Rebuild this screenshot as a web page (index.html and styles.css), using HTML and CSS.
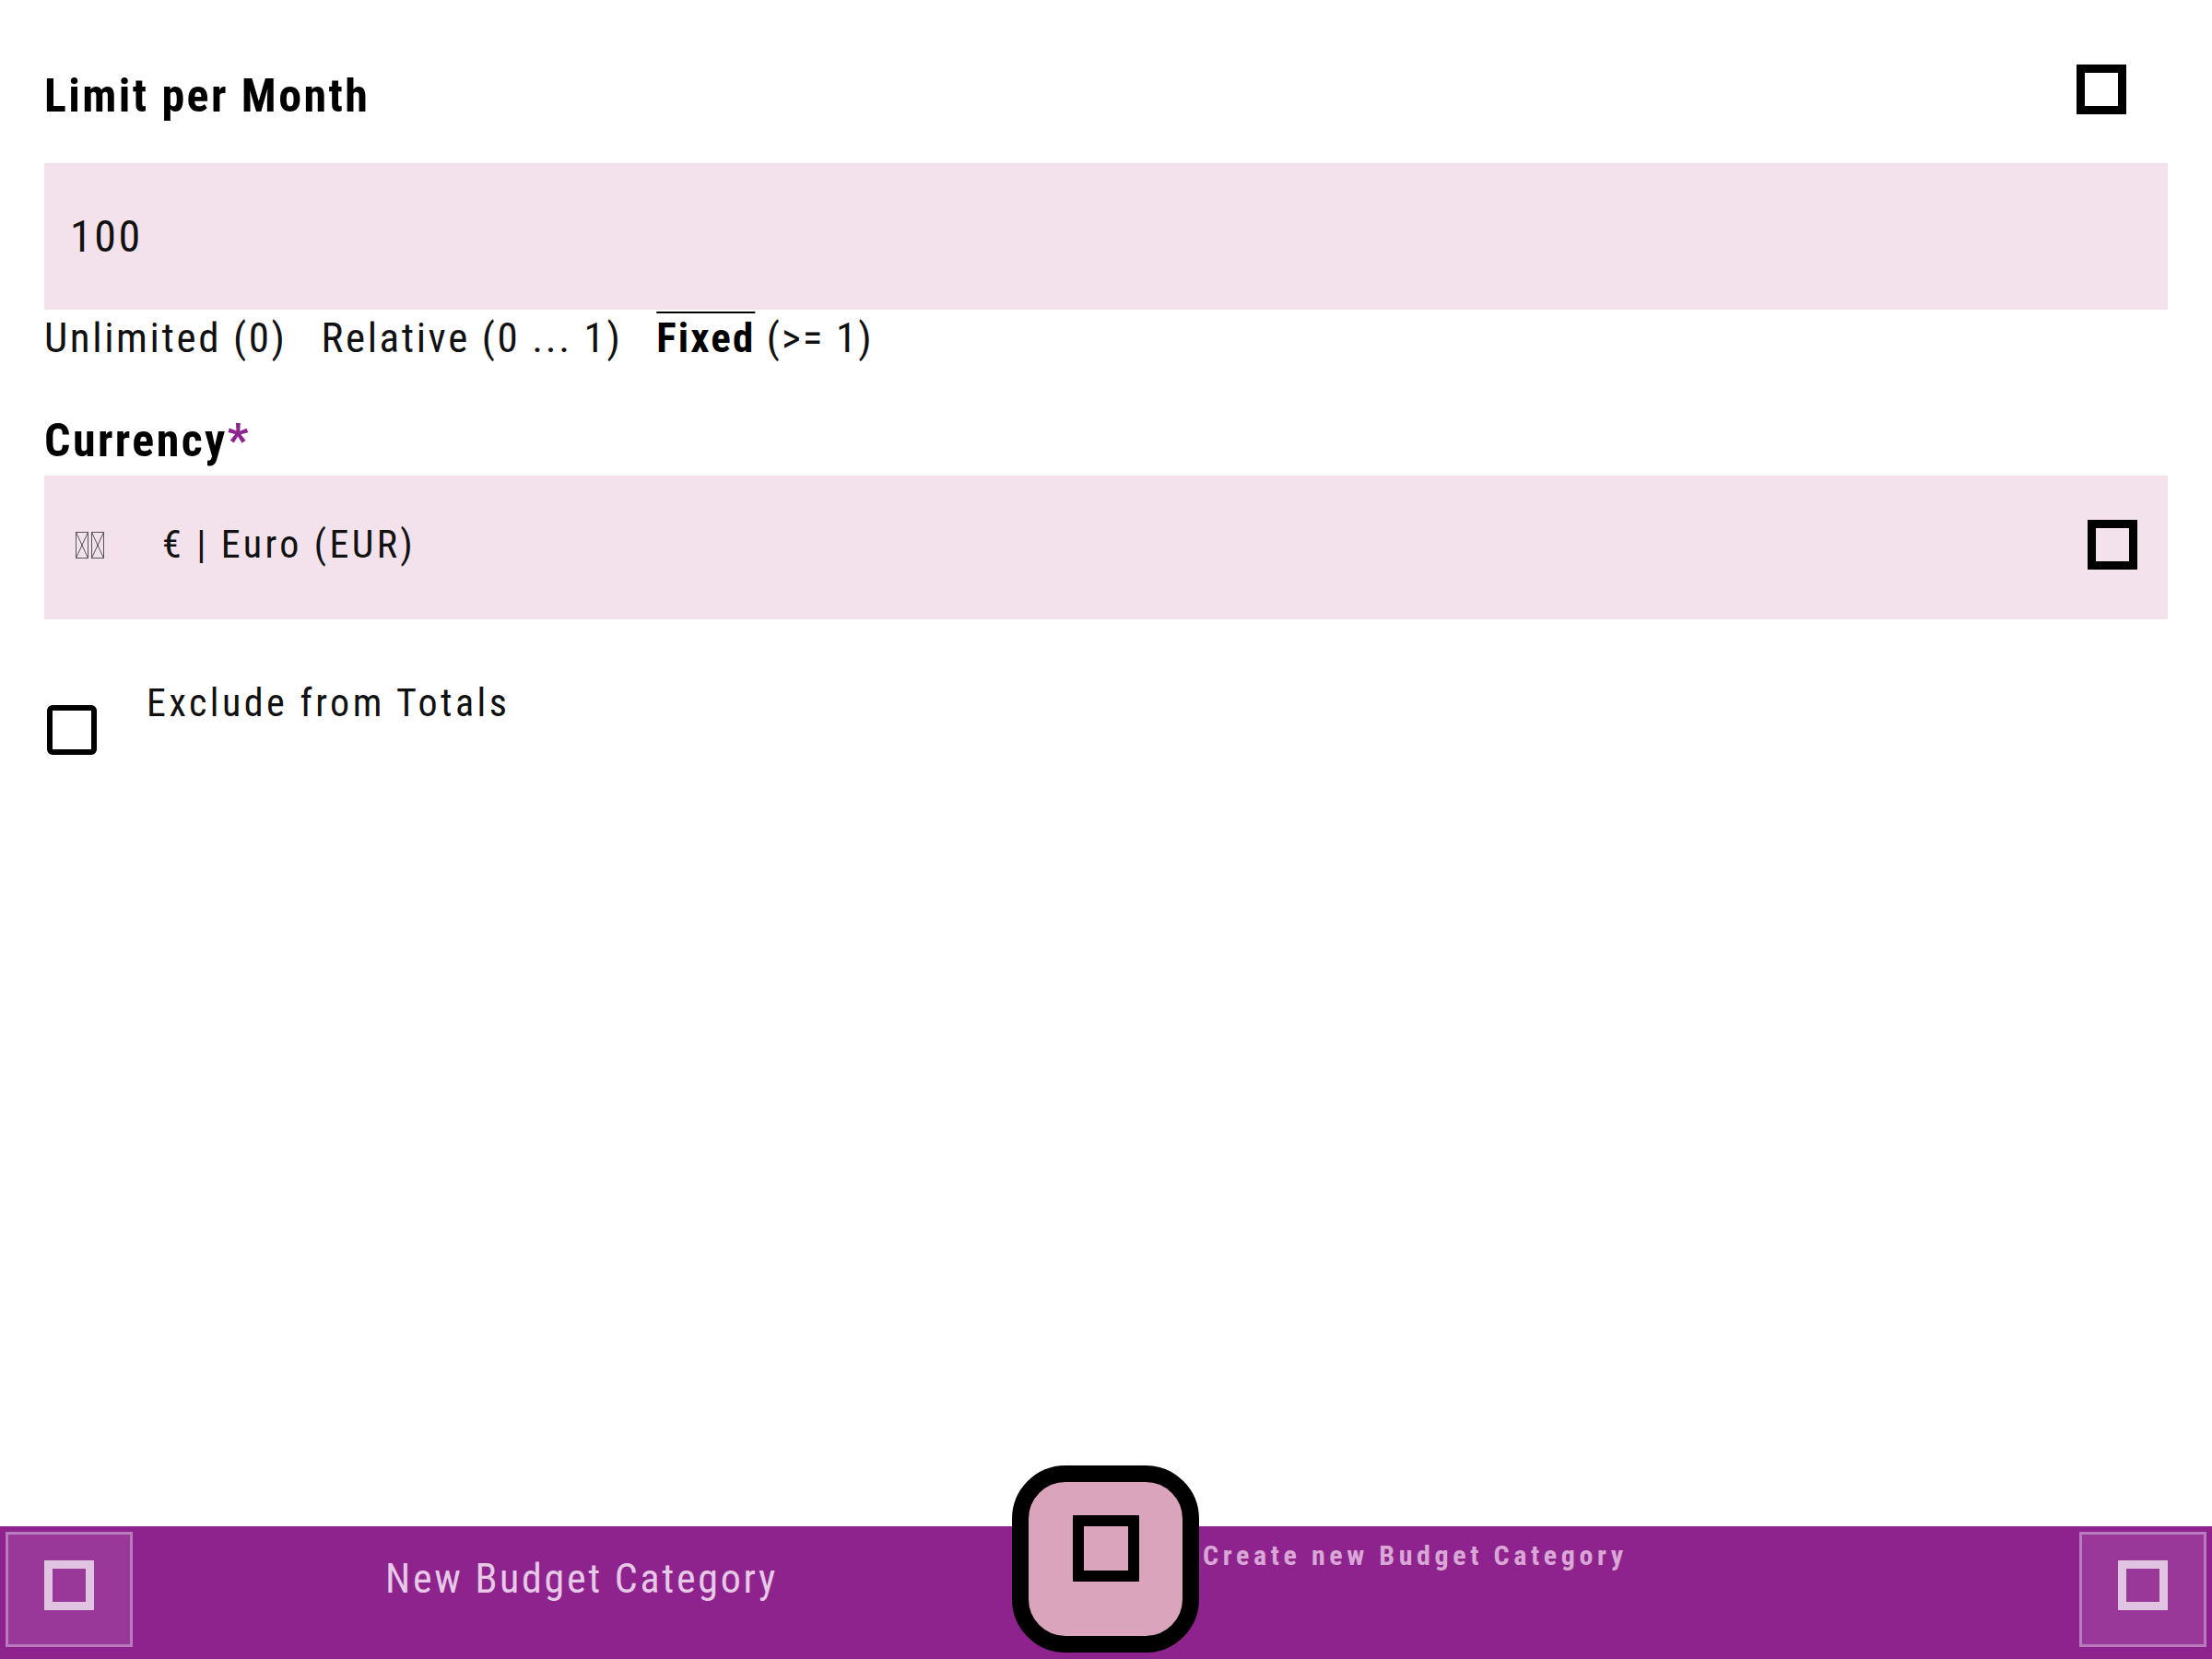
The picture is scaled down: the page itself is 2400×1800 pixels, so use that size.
FILE: index.html
```html
<!DOCTYPE html>
<html lang="en">
<head>
<meta charset="utf-8">
<title>New Budget Category</title>
<link rel="stylesheet" href="styles.css">
</head>
<body>
<main class="form">
  <div class="head">
    <h2 class="label">Limit per Month</h2>
    <span class="icon-sq"></span>
  </div>
  <div class="input">100</div>
  <div class="modes">
    <span>Unlimited (0)</span>
    <span>Relative (0 ... 1)</span>
    <span class="fixed"><b class="sel">Fixed</b> (&gt;= 1)</span>
  </div>
  <h2 class="label currency">Currency<span class="req">*</span></h2>
  <div class="select">
    <svg class="flag" width="32" height="29" viewBox="0 0 32 29" aria-hidden="true">
      <g fill="none" stroke="#555" stroke-width="1">
        <rect x="0.5" y="0.5" width="13" height="28"/>
        <path d="M0.5 0.5 L13.5 28.5 M13.5 0.5 L0.5 28.5"/>
        <rect x="17.5" y="0.5" width="13" height="28"/>
        <path d="M17.5 0.5 L30.5 28.5 M30.5 0.5 L17.5 28.5"/>
      </g>
    </svg>
    <span class="cur-text">€ | Euro (EUR)</span>
    <span class="icon-sq"></span>
  </div>
  <label class="check">
    <span class="box"></span>
    <span class="check-text">Exclude from Totals</span>
  </label>
</main>
<footer class="bar">
  <div class="nav-btn"><span class="icon-sq light"></span></div>
  <div class="bar-title">New Budget Category</div>
  <div class="nav-btn right"><span class="icon-sq light"></span></div>
</footer>
<div class="fab"><span class="icon-sq big"></span></div>
<div class="fab-label">Create new Budget Category</div>
</body>
</html>
```

FILE: styles.css
```css
html, body {
  margin: 0;
  height: 100%;
}

body {
  font-family: "Roboto Condensed", Roboto, "Noto Sans", sans-serif;
  color: #111;
  background: #fff;
  display: flex;
  flex-direction: column;
  position: relative;
  overflow: hidden;
}

.form {
  flex: 1;
  padding: 70px 48px 0 48px;
  display: flex;
  flex-direction: column;
}

.head {
  display: flex;
  justify-content: space-between;
  align-items: flex-start;
}

.label {
  margin: 4px 0 0 0;
  font-size: 50px;
  line-height: 60px;
  font-weight: 700;
  color: #000;
  letter-spacing: 2.4px;
}

.head .label {
  margin-bottom: 2px;
}

.icon-sq {
  display: block;
  width: 54px;
  height: 54px;
  box-sizing: border-box;
  border: 9px solid #000;
  flex: none;
}

.head .icon-sq {
  margin-right: 45px;
}

.input {
  margin-top: 41px;
  height: 159px;
  background: #f3e2eb;
  display: flex;
  align-items: center;
  padding-left: 28px;
  font-size: 48px;
  line-height: 56px;
  letter-spacing: 2.5px;
}

.modes {
  margin-top: 4px;
  display: flex;
  gap: 37px;
  font-size: 45px;
  line-height: 54px;
  letter-spacing: 2.6px;
}

.modes .fixed {
  letter-spacing: 2.1px;
}

.sel {
  font-weight: 700;
  color: #000;
  text-decoration: overline;
  text-decoration-thickness: 2px;
}

.label.currency {
  margin-top: 54px;
}

.req {
  color: #8e248e;
}

.select {
  margin-top: 8px;
  height: 156px;
  box-sizing: border-box;
  background: #f3e2eb;
  display: flex;
  align-items: center;
  padding: 0 33px 6px 34px;
  font-size: 42px;
  line-height: 50px;
  letter-spacing: 3.4px;
}

.flag {
  display: block;
  flex: none;
}

.cur-text {
  margin-left: 62px;
}

.select .icon-sq {
  margin-left: auto;
}

.check {
  margin-top: 66px;
  padding-left: 3px;
  display: flex;
  align-items: flex-start;
  gap: 54px;
  font-size: 42px;
  line-height: 50px;
  letter-spacing: 3.5px;
}

.box {
  display: block;
  width: 54px;
  height: 54px;
  margin-top: 27px;
  box-sizing: border-box;
  border: 6px solid #000;
  border-radius: 6px;
}

.bar {
  height: 144px;
  flex: none;
  box-sizing: border-box;
  padding: 6px;
  background: #8e238e;
  display: flex;
  align-items: flex-start;
}

.nav-btn {
  width: 138px;
  height: 125px;
  box-sizing: border-box;
  background: #9a389a;
  border: 3px solid #b87bbf;
  display: flex;
  justify-content: center;
  align-items: center;
  padding-bottom: 10px;
}

.nav-btn.right {
  margin-left: auto;
}

.icon-sq.light {
  border-color: #e1c4e1;
}

.bar-title {
  margin: 25px 0 0 274px;
  font-size: 44px;
  line-height: 52px;
  color: #e6c9e6;
  letter-spacing: 2.7px;
}

.fab {
  position: absolute;
  left: 1098px;
  top: 1590px;
  width: 203px;
  height: 203px;
  box-sizing: border-box;
  border: 18px solid #000;
  border-radius: 58px;
  background: #dba4bd;
  display: flex;
  justify-content: center;
  align-items: flex-start;
  padding-top: 36px;
}

.icon-sq.big {
  width: 72px;
  height: 72px;
  border-width: 12px;
}

.fab-label {
  position: absolute;
  left: 1305px;
  top: 1670px;
  font-size: 30px;
  line-height: 36px;
  font-weight: 700;
  letter-spacing: 4.6px;
  color: #d9a6d6;
}
```
